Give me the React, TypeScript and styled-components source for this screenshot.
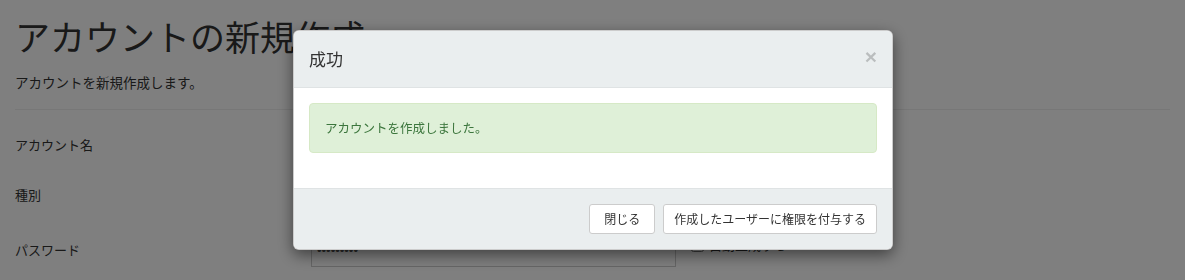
import * as React from 'react';
import styled, { createGlobalStyle } from 'styled-components';

const GlobalStyle = createGlobalStyle`
  html, body {
    margin: 0;
    padding: 0;
    background: #fff;
    overflow: hidden;
  }
  body {
    font-family: "Noto Sans CJK JP", "Noto Sans", sans-serif;
    color: #333;
    font-size: 13px;
  }
`;

const Page = styled.div`
  padding: 16px 15px 0;
`;

const Title = styled.h1`
  margin: 0;
  font-size: 35px;
  line-height: 40px;
  font-weight: 400;
  color: #333;
`;

const Lead = styled.p`
  margin: 16px 0 0;
  font-size: 13.5px;
  line-height: 20px;
`;

const Rule = styled.hr`
  margin: 17px 0 0;
  border: 0;
  border-top: 1px solid #eee;
`;

const Form = styled.div`
  margin: 0 -15px;
  padding-top: 18px;
`;

const FormGroup = styled.div<{ h: number }>`
  display: grid;
  grid-template-columns: 296px 395px 1fr;
  height: ${(p) => p.h}px;
`;

const Label = styled.div`
  padding: 7px 15px 0;
  font-size: 13px;
  line-height: 20px;
`;

const Field = styled.div`
  padding: 0 15px;
`;

const TextInput = styled.input`
  box-sizing: border-box;
  width: 100%;
  height: 34px;
  padding: 6px 5px;
  border: 1px solid #ccc;
  border-radius: 0;
  background: #fff;
  font-family: "Liberation Sans", sans-serif;
  font-size: 13px;
  color: #555;
  outline: none;
`;

const CheckLabel = styled.label`
  display: flex;
  align-items: center;
  align-self: start;
  gap: 5px;
  padding-top: 2px;
  font-size: 13px;
  line-height: 20px;
`;

const CheckBox = styled.input`
  margin: 0;
  width: 13px;
  height: 13px;
`;

const Backdrop = styled.div`
  position: fixed;
  inset: 0;
  background: rgba(0, 0, 0, 0.5);
`;

const Dialog = styled.div`
  position: fixed;
  top: 30px;
  left: 293px;
  width: 600px;
  box-sizing: border-box;
  border: 1px solid rgba(0, 0, 0, 0.2);
  border-radius: 6px;
  background: #fff;
  box-shadow: 0 5px 15px rgba(0, 0, 0, 0.5);
  overflow: hidden;
`;

const Header = styled.div`
  display: flex;
  align-items: center;
  justify-content: space-between;
  padding: 15px;
  background: #eaeeef;
  border-bottom: 1px solid #dfe3e4;
`;

const HeaderTitle = styled.h4`
  margin: 0;
  font-size: 17px;
  line-height: 26px;
  font-weight: 400;
  color: #333;
`;

const Close = styled.button`
  border: 0;
  padding: 0;
  margin-top: -6px;
  background: transparent;
  font-family: "Liberation Sans", sans-serif;
  font-size: 21px;
  font-weight: 700;
  line-height: 1;
  color: #000;
  opacity: 0.2;
`;

const Body = styled.div`
  padding: 15px;
`;

const Alert = styled.div`
  margin-bottom: 20px;
  padding: 15px;
  border: 1px solid #d6e9c6;
  border-radius: 4px;
  background: #dff0d8;
  color: #3c763d;
  font-size: 12.5px;
  line-height: 18px;
`;

const Footer = styled.div`
  display: flex;
  justify-content: flex-end;
  gap: 8px;
  padding: 15px;
  background: #eaeeef;
  border-top: 1px solid #dfe3e4;
`;

const Button = styled.button<{ px: number }>`
  height: 30px;
  padding: 0 ${(p) => p.px}px;
  border: 1px solid #ccc;
  border-radius: 3px;
  background: #fff;
  color: #333;
  font-family: "Noto Sans CJK JP", sans-serif;
  font-size: 12px;
  line-height: 28px;
`;

export default function App() {
  return (
    <>
      <GlobalStyle />
      <Page>
        <Title>アカウントの新規作成</Title>
        <Lead>アカウントを新規作成します。</Lead>
        <Rule />
        <Form>
          <FormGroup h={50}>
            <Label>アカウント名</Label>
            <Field>
              <TextInput type="text" readOnly />
            </Field>
          </FormGroup>
          <FormGroup h={55}>
            <Label>種別</Label>
            <Field />
          </FormGroup>
          <FormGroup h={34}>
            <Label>パスワード</Label>
            <Field>
              <TextInput type="password" defaultValue="123456789" readOnly />
            </Field>
            <CheckLabel>
              <CheckBox type="checkbox" readOnly />
              自動生成する
            </CheckLabel>
          </FormGroup>
        </Form>
      </Page>
      <Backdrop />
      <Dialog>
        <Header>
          <HeaderTitle>成功</HeaderTitle>
          <Close>×</Close>
        </Header>
        <Body>
          <Alert>アカウントを作成しました。</Alert>
        </Body>
        <Footer>
          <Button px={14}>閉じる</Button>
          <Button px={10}>作成したユーザーに権限を付与する</Button>
        </Footer>
      </Dialog>
    </>
  );
}
